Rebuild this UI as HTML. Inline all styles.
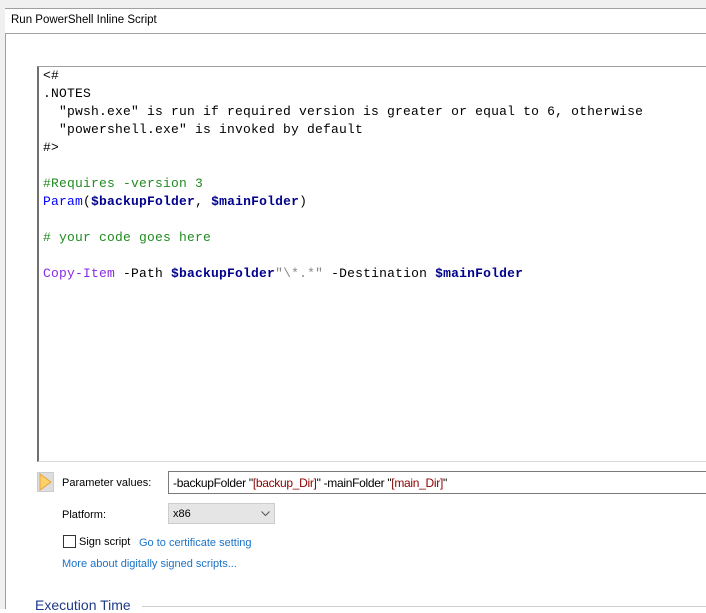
<!DOCTYPE html>
<html><head><style>
body{margin:0;width:706px;height:609px;overflow:hidden;background:#fff;font-family:"Liberation Sans",sans-serif;font-size:11px;color:#000;position:relative}
.a{position:absolute}
.code{font-family:"Liberation Mono",monospace;font-size:13px;letter-spacing:0.2px;line-height:18px;white-space:pre;left:43px;top:67px}
.g{color:#228b22}.b{color:#00008b;font-weight:bold}.p{color:#8a2be2}.n{color:#00f}.s{color:#8b0000}.gr{color:#888}
.lnk{color:#1a73c8}
</style></head><body>
<div class="a" style="left:0;top:0;width:706px;height:8px;background:#f0f0f0"></div>
<div class="a" style="left:0;top:8px;width:5px;height:601px;background:#f0f0f0;border-right:1px solid #a0a0a0"></div>
<div class="a" style="left:5px;top:8px;width:701px;height:24px;border-top:1px solid #a0a0a0;border-bottom:1px solid #a0a0a0;background:#fff"></div>
<div class="a" style="left:11px;top:14px;font-size:11.5px">Run PowerShell Inline Script</div>
<div class="a" style="left:37px;top:66px;width:680px;height:394px;border:1px solid #a0a0a0;border-left:2px solid #707070;border-bottom:1px solid #d8d8d8"></div>
<div class="a code">&lt;#
.NOTES
  "pwsh.exe" is run if required version is greater or equal to 6, otherwise
  "powershell.exe" is invoked by default
#&gt;

<span class="g">#Requires -version 3</span>
<span class="n">Param</span>(<span class="b">$backupFolder</span>, <span class="b">$mainFolder</span>)

<span class="g"># your code goes here</span>

<span class="p">Copy-Item</span> -Path <span class="b">$backupFolder</span><span class="gr">"\*.*"</span> -Destination <span class="b">$mainFolder</span></div>
<div class="a" style="left:37px;top:472px;width:17px;height:20px;background:#ddd;border:1px solid #ccc;box-sizing:border-box"><svg width="17" height="20" style="position:absolute;left:-1px;top:-1px"><path d="M3 2 L14 10 L3 18 Z" fill="#fbd26a" stroke="#e8a23a" stroke-width="1"/></svg></div>
<div class="a" style="left:62px;top:477px">Parameter values:</div>
<div class="a" style="left:168px;top:471px;width:540px;height:23px;border:1px solid #7a7a7a;box-sizing:border-box;padding:4px 4px;font-size:12px;letter-spacing:-0.3px">-backupFolder "<span class="s">[backup_Dir]</span>" -mainFolder "<span class="s">[main_Dir]</span>"</div>
<div class="a" style="left:62px;top:509px">Platform:</div>
<div class="a" style="left:168px;top:503px;width:107px;height:21px;background:#e5e5e5;border:1px solid #ccc;box-sizing:border-box;padding:4px 4px">x86<svg class="a" style="left:92px;top:7px" width="9" height="6"><path d="M0.5 0.5 L4.5 4.5 L8.5 0.5" fill="none" stroke="#555"/></svg></div>
<div class="a" style="left:63px;top:535px;width:13px;height:13px;border:1px solid #333;box-sizing:border-box"></div>
<div class="a" style="left:79px;top:536px">Sign script</div>
<div class="a lnk" style="left:139px;top:537px">Go to certificate setting</div>
<div class="a lnk" style="left:62px;top:558px">More about digitally signed scripts...</div>
<div class="a" style="left:35px;top:597px;font-size:14px;color:#1e3a8a">Execution Time</div>
<div class="a" style="left:142px;top:606px;width:564px;height:1px;background:#d0d0d0"></div>
</body></html>
